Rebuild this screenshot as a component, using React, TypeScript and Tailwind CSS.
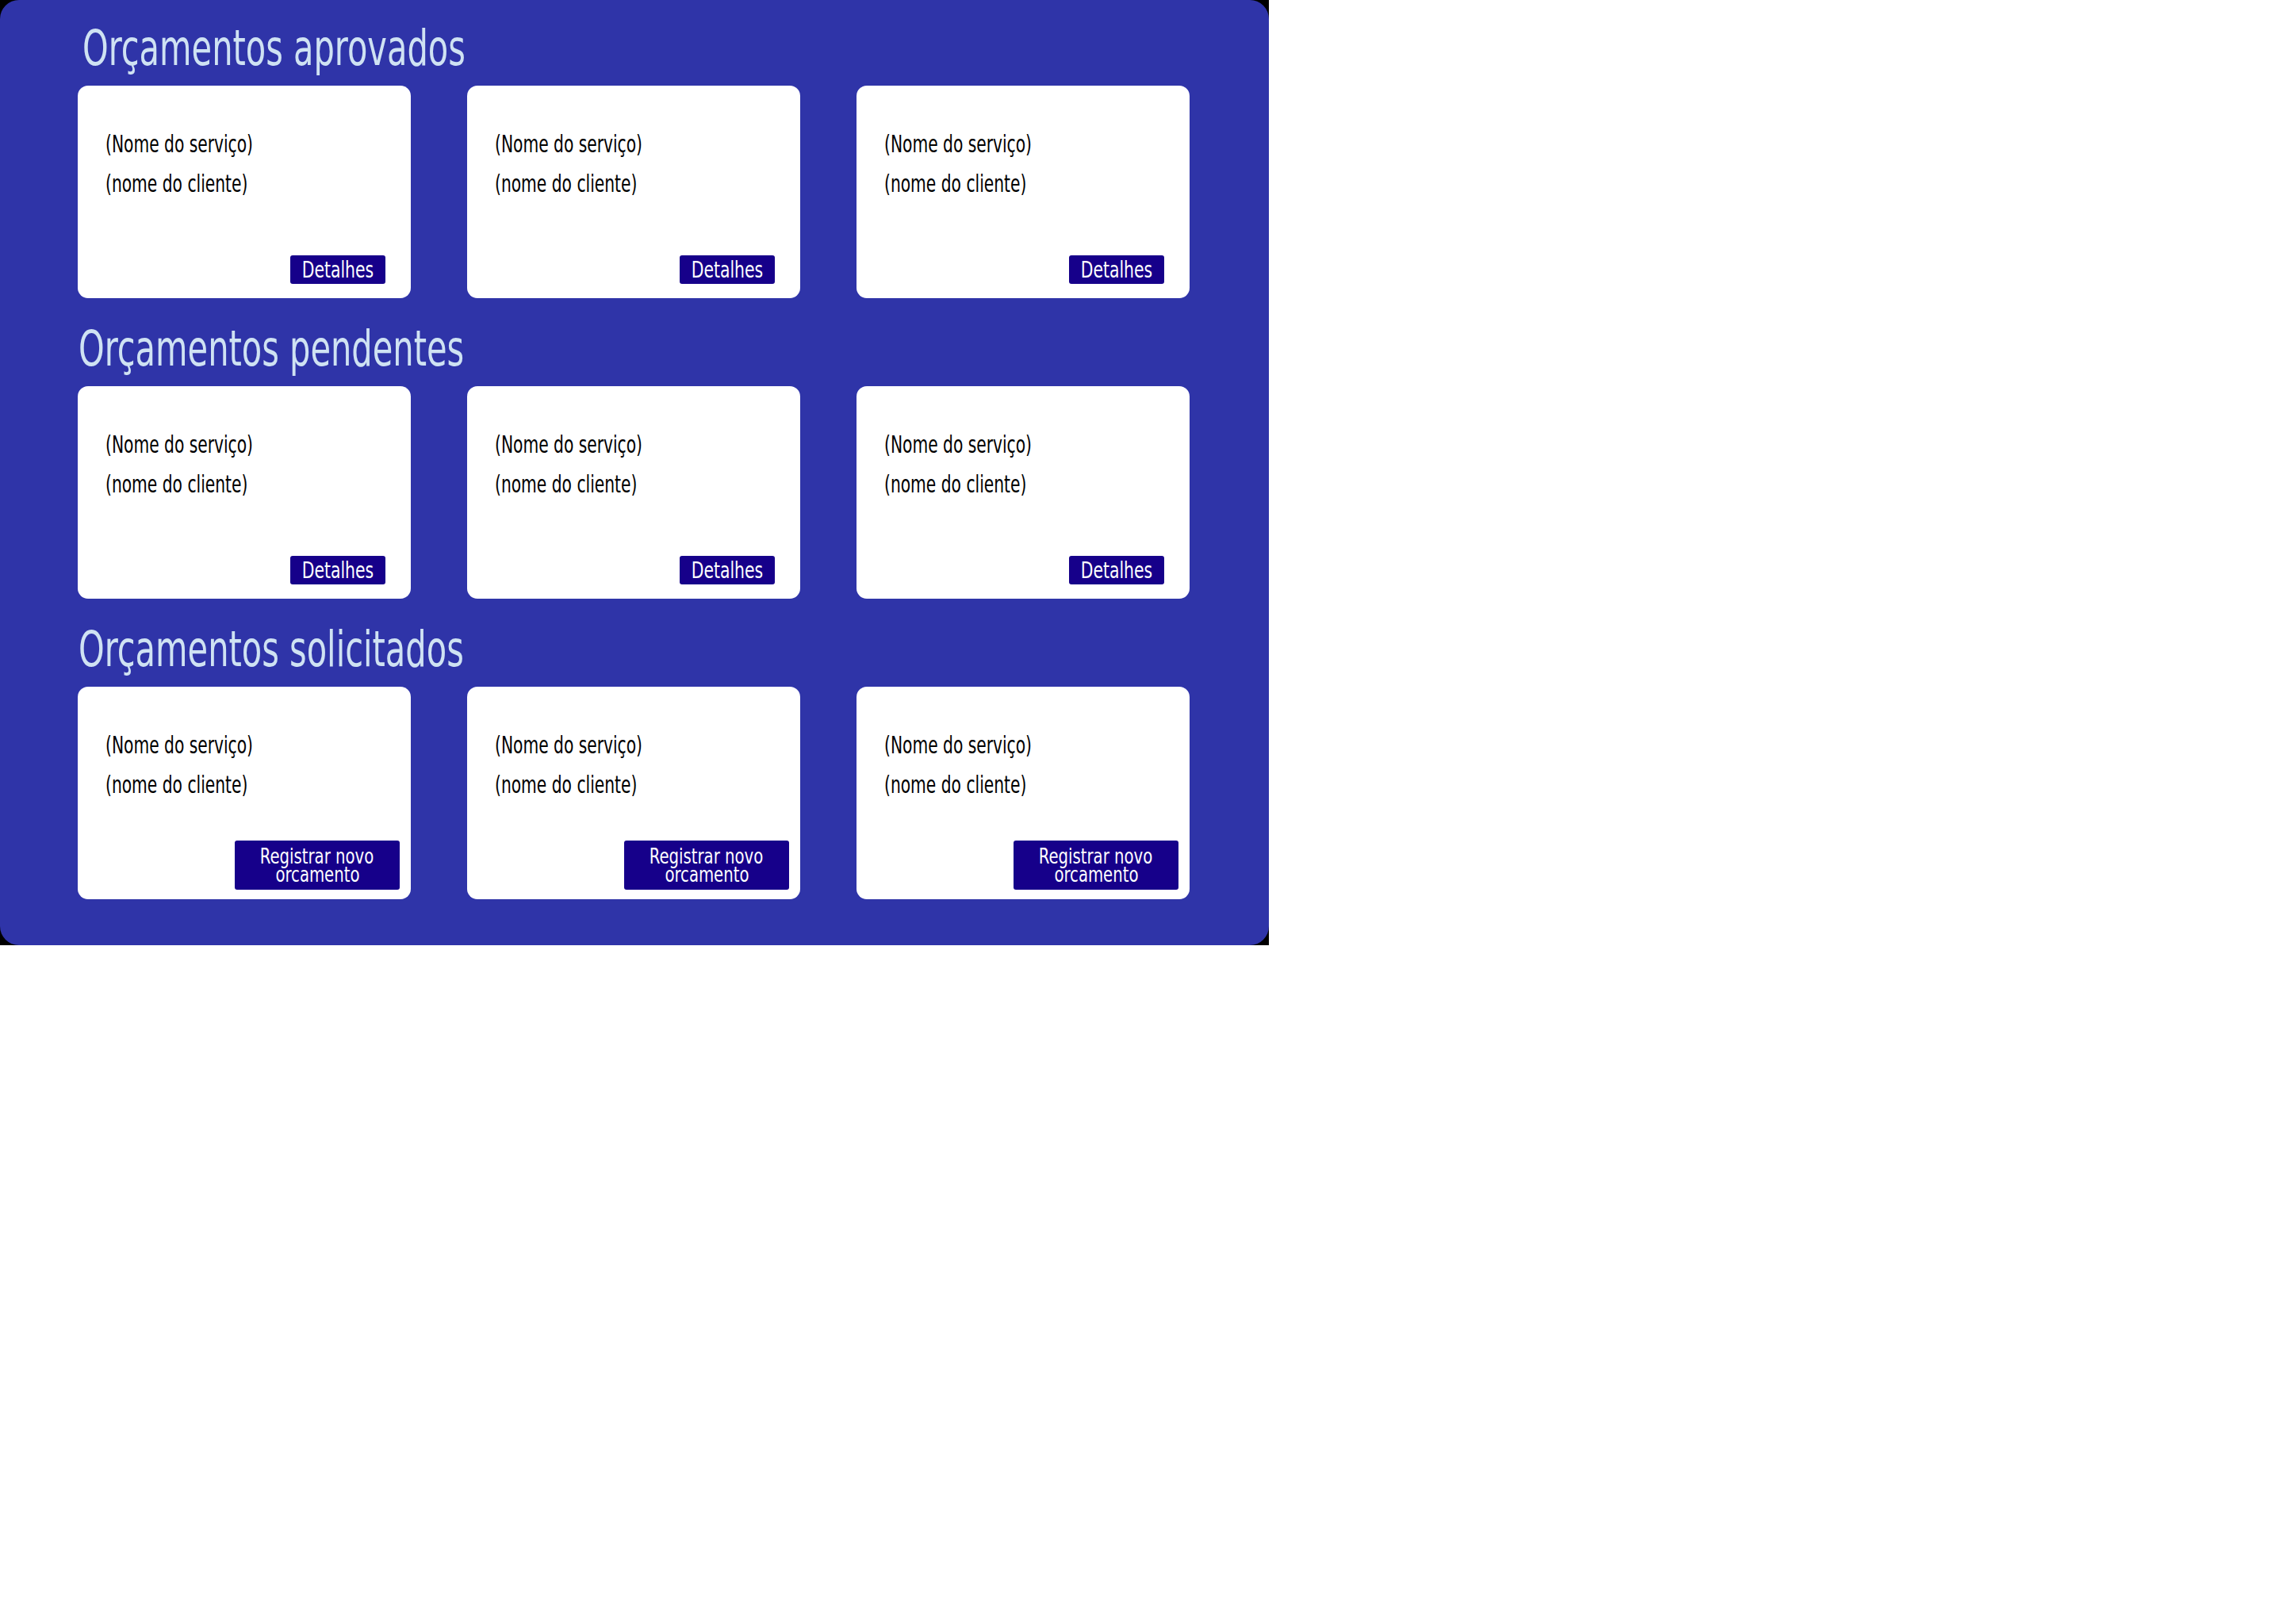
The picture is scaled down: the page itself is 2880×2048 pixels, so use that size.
import React from "react";

const font = "font-['Liberation_Sans_Narrow','DejaVu_Sans_Condensed',Roboto,sans-serif]";

function Card({ kind }: { kind: "details" | "register" }) {
  return (
    <div className="w-[420px] h-[268px] bg-white rounded-[13px] flex flex-col">
      <div className="pl-[35px] pt-[49px] text-black text-[30px] leading-[50px] flex flex-col items-start">
        <span className="inline-block origin-left scale-x-[0.75] whitespace-nowrap">(Nome do serviço)</span>
        <span className="inline-block origin-left scale-x-[0.75] whitespace-nowrap">(nome do cliente)</span>
      </div>
      {kind === "details" ? (
        <div className="mt-auto self-end mr-[32px] mb-[18px] w-[120px] h-[36px] rounded-[3px] bg-[#16008a] text-white text-[29px] leading-[36px] flex justify-center">
          <span className="inline-block scale-x-[0.78] whitespace-nowrap">Detalhes</span>
        </div>
      ) : (
        <div className="mt-auto self-end mr-[14px] mb-[12px] w-[208px] h-[62px] rounded-[3px] bg-[#16008a] text-white text-[27px] leading-[23px] flex flex-col items-center justify-center">
          <span className="inline-block scale-x-[0.81] whitespace-nowrap">Registrar novo</span>
          <span className="inline-block scale-x-[0.81] whitespace-nowrap">orcamento</span>
        </div>
      )}
    </div>
  );
}

function Section({ title, kind, first }: { title: string; kind: "details" | "register"; first?: boolean }) {
  return (
    <div className="flex flex-col">
      <div
        className={
          first
            ? "h-[108px] flex items-end pb-[16px] pl-[6px] text-[62px] leading-none text-[#cfe2f3]"
            : "h-[111px] flex items-end pb-[16px] pl-[1px] text-[62px] leading-none text-[#cfe2f3]"
        }
      >
        <span className="inline-block origin-left scale-x-[0.745] whitespace-nowrap">{title}</span>
      </div>
      <div className="grid grid-cols-[420px_420px_420px] gap-x-[71px]">
        <Card kind={kind} />
        <Card kind={kind} />
        <Card kind={kind} />
      </div>
    </div>
  );
}

export default function App() {
  return (
    <div className={`w-[1600px] h-[1192px] bg-black ${font}`}>
      <div className="w-full h-full bg-[#2f34a8] rounded-[24px] pl-[98px]">
        <Section title="Orçamentos aprovados" kind="details" first />
        <Section title="Orçamentos pendentes" kind="details" />
        <Section title="Orçamentos solicitados" kind="register" />
      </div>
    </div>
  );
}
